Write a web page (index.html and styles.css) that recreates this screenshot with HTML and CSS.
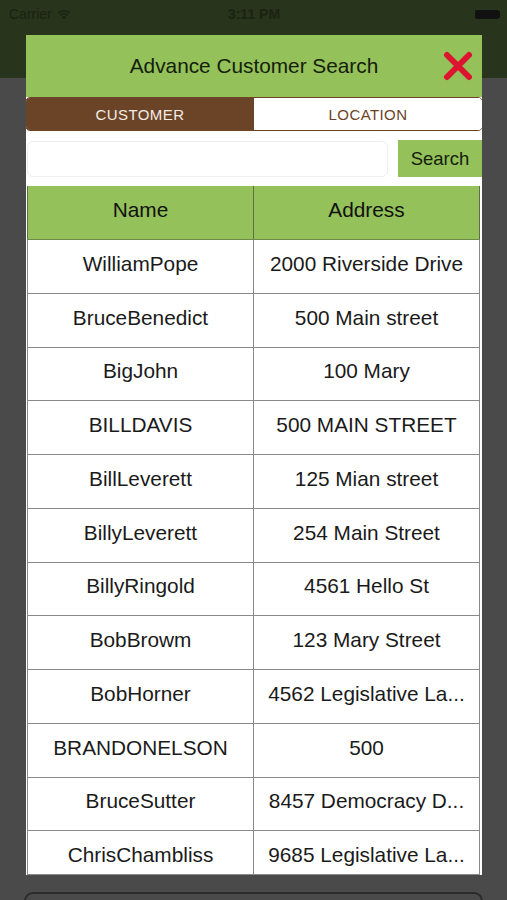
FILE: index.html
```html
<!DOCTYPE html>
<html lang="en">

<head>
    <meta charset="UTF-8">
    <meta name="viewport" content="width=device-width, initial-scale=1.0">
    <title>Advance Customer Search</title>
    <link rel="stylesheet" href="styles.css">
</head>

<body>
    <div id="phone">
        <div class="topbar">
            <div class="statusbar">
                <span class="carrier">Carrier
                    <svg class="wifi" width="14" height="11" viewBox="0 0 14 11">
                        <path d="M1 4.2 A9 9 0 0 1 13 4.2" fill="none" stroke="#1c2313" stroke-width="1.8" />
                        <path d="M3.2 6.4 A6 6 0 0 1 10.8 6.4" fill="none" stroke="#1c2313" stroke-width="1.8" />
                        <path d="M7 10.5 L4.9 8.3 A3 3 0 0 1 9.1 8.3 Z" fill="#1c2313" />
                    </svg>
                </span>
                <span class="clock">3:11 PM</span>
                <span class="battery"><span class="battery-level"></span></span>
            </div>
        </div>

        <div class="backdrop">
            <div class="ghost-card"></div>
        </div>

        <div id="modal">
            <div class="modal-head">
                <h2>Advance Customer Search</h2>
                <svg class="close" width="30" height="30" viewBox="0 0 30 30">
                    <path d="M4 4 L26 26 M26 4 L4 26" stroke="#dc1430" stroke-width="6" stroke-linecap="round" />
                </svg>
            </div>

            <div class="tabs">
                <div class="tab active">CUSTOMER</div>
                <div class="tab">LOCATION</div>
            </div>

            <div class="search-row">
                <input type="text" class="search-input">
                <button class="search-btn">Search</button>
            </div>

            <div class="table-wrap">
                <div class="row head">
                    <div class="cell">Name</div>
                    <div class="cell">Address</div>
                </div>
                <div id="rows"></div>
            </div>
        </div>
    </div>

    <script>
        const customers = [
            ['WilliamPope', '2000 Riverside Drive'],
            ['BruceBenedict', '500 Main street'],
            ['BigJohn', '100 Mary'],
            ['BILLDAVIS', '500 MAIN STREET'],
            ['BillLeverett', '125 Mian street'],
            ['BillyLeverett', '254 Main Street'],
            ['BillyRingold', '4561 Hello St'],
            ['BobBrowm', '123 Mary Street'],
            ['BobHorner', '4562 Legislative La...'],
            ['BRANDONELSON', '500'],
            ['BruceSutter', '8457 Democracy D...'],
            ['ChrisChambliss', '9685 Legislative La...']
        ];

        const rowsBox = document.getElementById('rows');
        customers.forEach(c => {
            const row = document.createElement('div');
            row.classList.add('row');
            row.innerHTML = `<div class="cell">${c[0]}</div><div class="cell">${c[1]}</div>`;
            rowsBox.appendChild(row);
        });
    </script>
</body>

</html>
```

FILE: styles.css
```css
body {
    margin: 0;
    padding: 0;
    font-family: 'Liberation Sans', Arial, sans-serif;
    background: #4a4a4a;
}

#phone {
    position: relative;
    width: 507px;
    height: 900px;
    overflow: hidden;
    background: #4a4a4a;
}

.topbar {
    height: 78px;
    background: #28341b;
}

.statusbar {
    height: 28px;
    display: flex;
    align-items: center;
    justify-content: space-between;
    padding: 0 8px 0 9px;
    color: #1c2313;
    font-size: 14px;
}

.carrier {
    display: flex;
    align-items: center;
    gap: 5px;
    width: 120px;
}

.clock {
    font-weight: bold;
    font-size: 14px;
}

.battery {
    width: 120px;
    display: flex;
    justify-content: flex-end;
}

.battery-level {
    display: block;
    width: 24px;
    height: 9px;
    background: #111;
    border-radius: 2px;
    box-shadow: 2px 0 0 -1px #111;
}

.backdrop {
    height: 822px;
    display: flex;
    flex-direction: column;
    justify-content: flex-end;
    padding: 0 24px;
}

.ghost-card {
    height: 14px;
    margin-bottom: -10px;
    border: 2px solid #2b2b2b;
    border-radius: 12px;
}

#modal {
    position: absolute;
    top: 35px;
    left: 26px;
    width: 456px;
    height: 840px;
    background: #fff;
    display: flex;
    flex-direction: column;
    overflow: hidden;
}

.modal-head {
    height: 62px;
    background: #94c159;
    display: flex;
    align-items: center;
    justify-content: center;
    position: relative;
}

.modal-head h2 {
    margin: 0;
    font-size: 20.8px;
    font-weight: normal;
    color: #15200c;
}

.close {
    position: absolute;
    right: 9px;
    top: 16px;
}

.tabs {
    height: 32px;
    margin: 0 -1px;
    display: flex;
    border: 1px solid #6b4427;
    border-radius: 5px;
    overflow: hidden;
}

.tab {
    flex: 1;
    display: flex;
    align-items: center;
    justify-content: center;
    font-size: 15px;
    letter-spacing: 0.4px;
    color: #6b4427;
    background: #fff;
}

.tab.active {
    background: #6b4427;
    color: #f3ebe4;
}

.search-row {
    display: flex;
    align-items: center;
    gap: 10px;
    margin-top: 9px;
    height: 37px;
}

.search-input {
    flex: 1;
    height: 36px;
    box-sizing: border-box;
    border: 1px solid #eeeeee;
    border-radius: 6px;
    outline: none;
    margin-left: 1px;
}

.search-btn {
    width: 84px;
    height: 37px;
    border: none;
    background: #94c159;
    font-family: 'Liberation Sans', Arial, sans-serif;
    font-size: 18.5px;
    color: #15200c;
    padding: 0;
}

.table-wrap {
    flex: 1;
    margin: 9px 2px 0 1px;
    overflow: hidden;
    border-bottom: 1px solid #8a8a8a;
}

.row {
    display: flex;
    height: 53.75px;
    box-sizing: border-box;
    border-bottom: 1.5px solid #8a8a8a;
}

.row.head {
    height: 54px;
    background: #94c159;
    border-bottom: 1px solid #6f8a4e;
}

.cell {
    flex: 1;
    display: flex;
    align-items: center;
    justify-content: center;
    padding: 0 8px 5px;
    font-size: 20.8px;
    color: #1a1a1a;
    white-space: nowrap;
    overflow: hidden;
    border-left: 1.5px solid #8a8a8a;
}

.cell:last-child {
    border-right: 1.5px solid #8a8a8a;
}

.row.head .cell {
    padding-bottom: 6px;
    color: #111;
    border-color: #5d6f45;
}
```
